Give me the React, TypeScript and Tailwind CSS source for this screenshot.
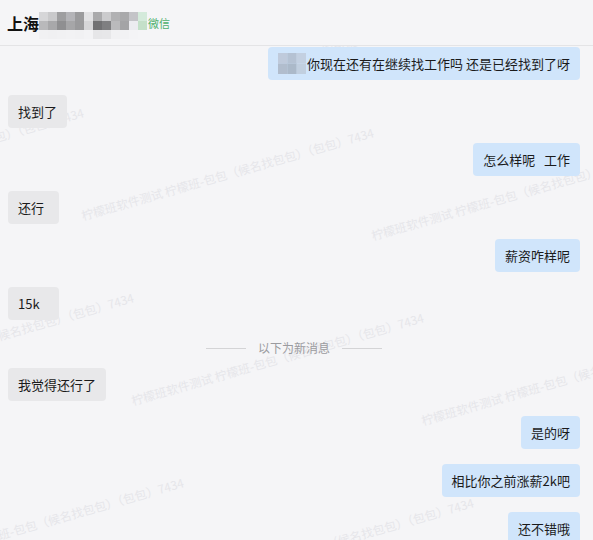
import React from 'react';

type Msg =
  | { kind: 'in'; text: string }
  | { kind: 'out'; text: string; masked?: boolean }
  | { kind: 'divider'; text: string };

const messages: Msg[] = [
  { kind: 'out', text: '你现在还有在继续找工作吗 还是已经找到了呀', masked: true },
  { kind: 'in', text: '找到了' },
  { kind: 'out', text: '怎么样呢   工作' },
  { kind: 'in', text: '还行' },
  { kind: 'out', text: '薪资咋样呢' },
  { kind: 'in', text: '15k' },
  { kind: 'divider', text: '以下为新消息' },
  { kind: 'in', text: '我觉得还行了' },
  { kind: 'out', text: '是的呀' },
  { kind: 'out', text: '相比你之前涨薪2k吧' },
  { kind: 'out', text: '还不错哦' },
];

const WATERMARK = '柠檬班软件测试 柠檬班-包包（候名找包包）（包包）7434';

// header name mosaic, 9px blocks
const nameMosaic = [
  ['#d6d6d8', '#c9c9cb', '#9e9ea0', '#b4b4b8', '#9b9b9d', '#e2e2e4', '#aaaaac', '#cbcbcd', '#b1b1b3', '#a9a9ab', '#c4c4c8', '#d4eadb'],
  ['#b9b9bb', '#a8a8aa', '#8f8f91', '#a6a6a8', '#9a9a9c', '#d6d6d8', '#717173', '#7f7f81', '#bababc', '#a4a4a6', '#ececf0', '#c4e0c9'],
  ['#f1f1f3', '#f0f0f2', '#f1f1f3', '#f2f2f4', '#f1f1f3', '#f3f3f5', '#e6e6e8', '#e7e7e9', '#f1f1f3', '#f2f2f4', '#f4f4f6', '#f5f5f7'],
];

const bubbleMosaic = [
  ['#bfcadb', '#b5c2d3', '#c3d0e1'],
  ['#b1bdcd', '#abb9c9', '#c1cfdf'],
];

const NameMosaic = () => (
  <svg width="108" height="27" viewBox="0 0 108 27" className="block">
    {nameMosaic.map((row, r) =>
      row.map((c, i) => <rect key={`${r}-${i}`} x={i * 9} y={r * 9} width="9" height="9" fill={c} />)
    )}
  </svg>
);

const BubbleMosaic = () => (
  <svg width="28" height="21" viewBox="0 0 28 21" className="block -my-[2px] mr-[1px] shrink-0">
    {bubbleMosaic.map((row, r) =>
      row.map((c, i) => (
        <rect key={`${r}-${i}`} x={i * 9.33} y={r * 10.5} width="9.4" height="10.5" fill={c} />
      ))
    )}
  </svg>
);

// watermark tiles: column step (290, 20), row step (50, 185)
const marks: Array<{ x: number; y: number }> = [];
for (let r = -1; r < 3; r++) {
  for (let c = -1; c < 3; c++) {
    marks.push({ x: 80 + c * 290 + r * 50, y: 210 + c * 20 + r * 185 });
  }
}

const Watermark = () => (
  <div className="pointer-events-none absolute inset-0 overflow-hidden">
    {marks.map((m, i) => (
      <span
        key={i}
        className="absolute whitespace-nowrap text-[12px] leading-none text-[#e6e6ea] origin-top-left"
        style={{ left: m.x, top: m.y, transform: 'rotate(-16deg)' }}
      >
        {WATERMARK}
      </span>
    ))}
  </div>
);

const Bubble = ({ msg }: { msg: Msg }) => {
  if (msg.kind === 'divider') {
    return (
      <div className="mt-[4px] mb-[11px] flex h-[18px] items-center justify-center gap-3">
        <div className="h-px w-[40px] bg-[#d4d4d6]" />
        <span className="text-[12px] text-[#9b9b9f]">{msg.text}</span>
        <div className="h-px w-[40px] bg-[#d4d4d6]" />
      </div>
    );
  }
  const out = msg.kind === 'out';
  return (
    <div className={`mb-[15px] flex ${out ? 'justify-end' : 'justify-start'}`}>
      <div
        className={`flex h-[33px] min-w-[51px] items-center whitespace-pre rounded-[4px] px-[10px] text-[13px] leading-[17px] text-[#1b1b1b] ${
          out ? 'bg-[#d0e5fb]' : 'bg-[#e8e8ea]'
        }`}
      >
        {msg.kind === 'out' && msg.masked && <BubbleMosaic />}
        <span>{msg.text}</span>
      </div>
    </div>
  );
};

export default function App() {
  return (
    <div
      className="relative h-[540px] w-[593px] overflow-hidden bg-[#f5f5f7]"
      style={{ fontFamily: '"Noto Sans CJK SC", "Noto Sans", sans-serif' }}
    >
      <Watermark />
      <div className="relative flex h-[46px] items-center border-b border-[#e4e4e6] bg-[#f5f5f7] pl-[7px]">
        <span className="text-[16px] font-bold leading-none text-[#111]">上海</span>
        <div className="mt-[6px]">
          <NameMosaic />
        </div>
        <span className="ml-[1px] mt-[2px] text-[11px] text-[#4caf6b]">微信</span>
      </div>
      <div className="relative flex flex-col pt-[1px] pl-[8px] pr-[13px]">
        {messages.map((m, i) => (
          <Bubble key={i} msg={m} />
        ))}
      </div>
    </div>
  );
}
